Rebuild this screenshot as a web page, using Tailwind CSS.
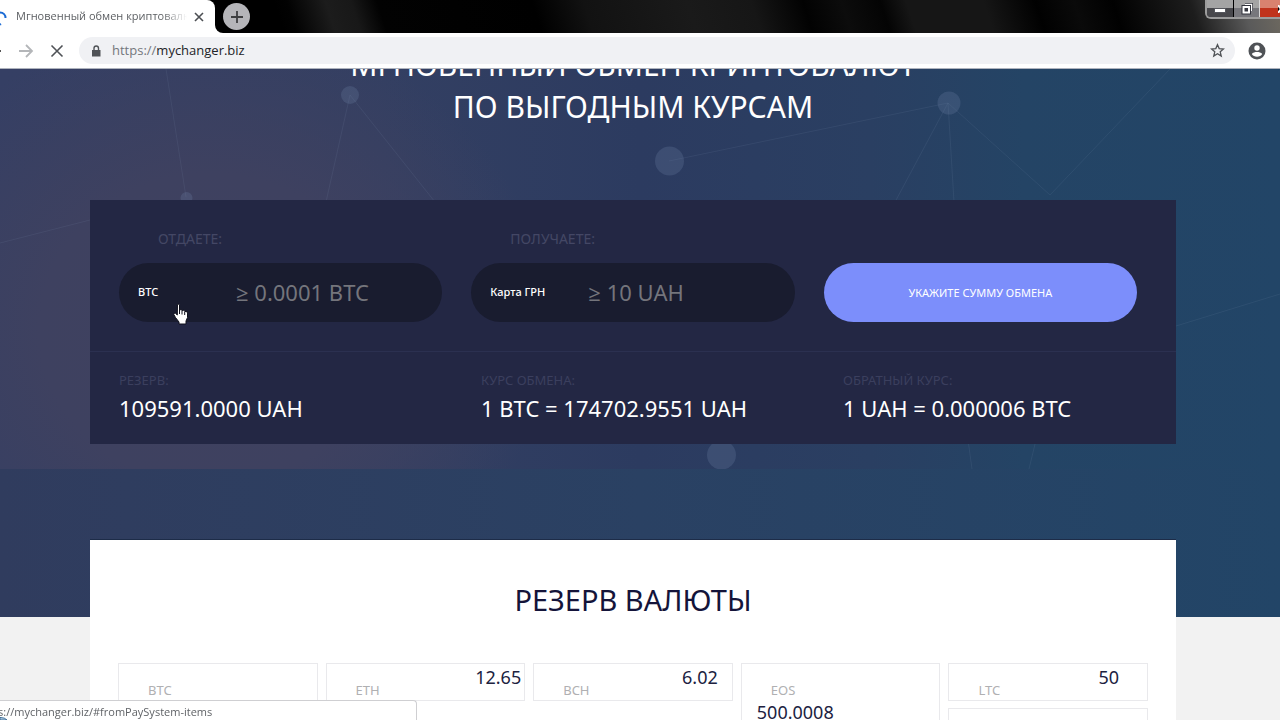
<!DOCTYPE html>
<html lang="ru">
<head>
<meta charset="utf-8">
<title>Мгновенный обмен криптовалют</title>
<script src="https://cdn.jsdelivr.net/npm/@tailwindcss/browser@4"></script>
</head>
<body class="flex h-screen flex-col overflow-hidden bg-[#f2f2f2] font-['Noto_Sans','Open_Sans',sans-serif]">

<!-- Browser chrome -->
<header class="relative shrink-0 border-b border-[#aeb3bd] bg-white font-['Open_Sans',sans-serif]">
  <div class="flex h-[33px] items-stretch bg-[linear-gradient(72deg,#000_22%,#020202_23%,#1c1c1c_26%,#181818_28%,#020202_30%,#000_42%,#121212_46%,#1a1a1a_54%,#161616_59%,#020202_63%,#0c0c0c_66%,#040404_69%,#161616_71%,#161616_77%,#010101_81%,#0a0a0a_84%,#010101_87%,#1d1d1d_93%,#5a5a5a_97%,#6f6a60_100%)]">
    <div class="flex w-[215px] items-center rounded-tr-lg bg-white">
      <svg class="h-5 w-[16px] shrink-0" viewBox="0 0 16 20" fill="none" stroke="#1a6ad4" stroke-width="2"><path d="M0 5.500C3.500 5.500 5.500 8 5.500 11"/><path d="M0 17.500l1-.5"/></svg>
      <span class="w-[171px] overflow-hidden whitespace-nowrap bg-linear-to-r from-[#55585c] from-85% to-transparent bg-clip-text text-[11px] text-transparent">Мгновенный обмен криптовалют</span>
      <button class="ml-[6px] flex h-4 w-4 items-center" aria-label="Закрыть вкладку">
        <svg class="h-3 w-3" viewBox="0 0 12 12" stroke="#4c4f53" stroke-width="1.600"><path d="M2 2l8 8M10 2l-8 8"/></svg>
      </button>
    </div>
    <div class="w-2 self-end bg-white"><div class="h-2 rounded-bl-lg bg-black"></div></div>
    <button class="mt-[3px] flex h-[27px] w-[27px] items-center justify-center rounded-full bg-[#b5b5b9]" aria-label="Новая вкладка">
      <svg class="h-3 w-3" viewBox="0 0 12 12" stroke="#3d3e40" stroke-width="1.800"><path d="M6 0v12M0 6h12"/></svg>
    </button>
    <div class="ml-auto flex h-[19px] overflow-hidden rounded-bl-md border-b-2 border-l-2 border-[#9c9c9c]">
      <button class="flex w-[27px] items-center justify-center border-r border-black bg-linear-to-b from-[#a4a4a4] from-45% to-[#48484c] to-50%" aria-label="Свернуть"><span class="mt-1 h-[5px] w-3 border border-[#55565c] bg-white"></span></button>
      <button class="flex w-[26px] items-center justify-center border-r border-[#d5d5d5] bg-linear-to-b from-[#a4a4a4] from-45% to-[#77777c] to-50%" aria-label="Развернуть">
        <svg class="h-3 w-3" viewBox="0 0 12 12" fill="none"><path d="M4 1.500h6.500V8" stroke="#33353d" stroke-width="3"/><path d="M4 1.500h6.500V8" stroke="#fff" stroke-width="1.500"/><rect x="2.500" y="4" width="5.500" height="5.500" fill="#33353d" stroke="#33353d" stroke-width="4"/><rect x="2.500" y="4" width="5.500" height="5.500" stroke="#fff" stroke-width="2"/></svg>
      </button>
      <button class="flex w-[20px] items-center justify-end bg-linear-to-b from-[#d9826f] from-45% to-[#c0331c] to-50%" aria-label="Закрыть"><svg class="h-2 w-[2px]" viewBox="0 0 2 8" stroke="#fff" stroke-width="2"><path d="M0 0l3 4-3 4"/></svg></button>
    </div>
  </div>
  <div class="flex h-[35px] items-center">
    <button class="h-4 w-[18px]" aria-label="Назад"><svg class="h-4 w-[18px]" viewBox="0 0 18 16" stroke="#555" stroke-width="2"><path d="M0 8h1"/></svg></button>
    <button aria-label="Вперёд"><svg class="h-4 w-4" viewBox="0 0 16 16" fill="none" stroke="#b4b6b9" stroke-width="1.800"><path d="M1 8h13M8 2l6 6-6 6"/></svg></button>
    <button class="ml-[15px]" aria-label="Остановить"><svg class="h-4 w-4" viewBox="0 0 16 16" fill="none" stroke="#4f5256" stroke-width="1.600"><path d="M2.500 2.500l11 11M13.500 2.500l-11 11"/></svg></button>
    <div class="ml-[14px] flex h-[27px] grow items-center rounded-full bg-[#f0f1f4] pr-[10px] pl-[11px]">
      <svg class="h-3 w-3" viewBox="0 0 12 12"><path d="M2 5h8.500v6.500H2z" fill="#505357"/><path d="M4 5V3.200a2.200 2.200 0 0 1 4.500 0V5" fill="none" stroke="#505357" stroke-width="1.400"/></svg>
      <label for="url" class="ml-[10px] text-[13px] text-[#74777c]">https://</label>
      <input id="url" class="min-w-0 grow text-[13px] text-[#222327] outline-none" value="mychanger.biz">
      <button aria-label="Добавить в закладки"><svg class="h-[15px] w-[15px]" viewBox="0 0 16 16" fill="none" stroke="#4f5256" stroke-width="1.400"><path d="M8 1.800l1.800 4.200 4.600.4-3.500 3 1.100 4.500L8 11.500l-4 2.400 1.100-4.500-3.500-3 4.600-.4z"/></svg></button>
    </div>
    <button class="mr-[14px] ml-[13px]" aria-label="Профиль"><svg class="h-[18px] w-[18px]" viewBox="0 0 18 18"><circle cx="9" cy="9" r="8.500" fill="#4f5256"/><circle cx="9" cy="6" r="2.700" fill="#fff"/><path d="M3.800 12c1-1.600 3.300-2 5.200-2s4.200.4 5.200 2c-1 1.700-3 2.800-5.200 2.800S4.800 13.700 3.800 12z" fill="#fff"/></svg></button>
  </div>
</header>

<main class="relative grow overflow-hidden">
  <!-- Hero backdrop -->
  <div class="absolute inset-x-0 top-0 h-[548px] bg-linear-to-r from-[#303c5e] via-[#2a4163] via-50% to-[#224567]">
    <div class="h-[400px] overflow-hidden bg-[radial-gradient(ellipse_340px_310px_at_210px_260px,#40415f_0%,#3e4160_50%,#3e416000_100%),linear-gradient(90deg,#353f64_0%,#333f62_30%,#2c3b60_50%,#2a3f62_68%,#244465_80%,#224567_100%)]">
      <svg class="h-full w-full" viewBox="0 69 1280 400" preserveAspectRatio="xMinYMin slice">
        <g stroke="#8fa4c8" stroke-opacity=".1" fill="none">
          <path d="M669 161L948 103L895 202M948 103L954 202M948 103L1050 195L1170 69M1176 326L1280 294M350 95L435 202M350 95L326 202M166 69L186 197M0 243L90 220M968 440L972 469M1036 440L1029 469"/>
        </g>
        <g fill="#6f83a8" fill-opacity=".25"><circle cx="350" cy="95" r="9"/><circle cx="669.500" cy="161" r="14.500"/><circle cx="949" cy="103" r="11.500"/><circle cx="721.500" cy="455" r="14.500"/><circle cx="186.500" cy="198" r="6"/></g>
      </svg>
    </div>
  </div>

  <div class="relative pr-[14px]">
    <div class="mx-auto max-w-[1086px]">
      <h1 class="-mt-[25px] text-center text-[30px] leading-[42px] text-white uppercase">Мгновенный обмен криптовалют<br>по выгодным курсам</h1>

      <form class="mt-[72px] bg-[#232744]">
        <div class="grid grid-cols-[minmax(0,323fr)_minmax(0,323fr)_minmax(0,313fr)] items-end gap-x-[29px] border-b border-[#2b3050] pt-[28px] pr-[39px] pb-[29px] pl-[29px]">
          <div>
            <label for="give" class="block pl-[39px] text-[14px] leading-[22px] text-[#444765]">ОТДАЕТЕ:</label>
            <div class="mt-[13px] flex h-[59px] items-center rounded-full bg-[#191c2f]">
              <select aria-label="Валюта" class="w-[117px] shrink-0 appearance-none pl-[19px] text-[11px] font-medium text-white outline-none"><option>BTC</option></select>
              <input id="give" class="min-w-0 grow text-[22px] outline-none placeholder:text-[#74757c]" placeholder="≥ 0.0001 BTC">
            </div>
          </div>
          <div>
            <label for="get" class="block pl-[39px] text-[14px] leading-[22px] text-[#444765]">ПОЛУЧАЕТЕ:</label>
            <div class="mt-[13px] flex h-[59px] items-center rounded-full bg-[#191c2f]">
              <select aria-label="Валюта получения" class="w-[117px] shrink-0 appearance-none pl-[19px] text-[11px] font-medium text-white outline-none"><option>Карта ГРН</option></select>
              <input id="get" class="min-w-0 grow text-[22px] outline-none placeholder:text-[#74757c]" placeholder="≥ 10 UAH">
            </div>
          </div>
          <button type="button" class="h-[59px] rounded-full bg-[#7c8efb] pt-px text-[11px] text-white">УКАЖИТЕ СУММУ ОБМЕНА</button>
        </div>
        <dl class="grid grid-cols-3 pt-[17px] pb-[19px]">
          <div class="pl-[29px]"><dt class="text-[13px] leading-[22px] text-[#3b3f5e]">РЕЗЕРВ:</dt><dd class="text-[22px] leading-[34px] text-white">109591.0000 UAH</dd></div>
          <div class="pl-[29px]"><dt class="text-[13px] leading-[22px] text-[#3b3f5e]">КУРС ОБМЕНА:</dt><dd class="text-[22px] leading-[34px] text-white">1 BTC = 174702.9551 UAH</dd></div>
          <div class="pl-[29px]"><dt class="text-[13px] leading-[22px] text-[#3b3f5e]">ОБРАТНЫЙ КУРС:</dt><dd class="text-[22px] leading-[34px] text-white">1 UAH = 0.000006 BTC</dd></div>
        </dl>
      </form>

      <section class="mt-[95px] border-t border-[#1d2c48] bg-white px-[28px] pt-[39px]">
        <h2 class="text-center text-[29px] leading-[42px] text-[#14143a]">РЕЗЕРВ ВАЛЮТЫ</h2>
        <div class="mt-[42px] grid grid-cols-5 items-start gap-x-2 text-[#20223f]">
          <div class="h-[90px] border border-[#e9e9ec] pt-[15px] pl-[29px] text-[13px] leading-[22px] text-[#b0b0b2]">BTC</div>
          <div class="flex h-[38px] justify-between border border-[#e9e9ec] pr-[3px] pl-[29px]"><span class="pt-[15px] text-[13px] leading-[22px] text-[#b0b0b2]">ETH</span><span class="text-[18px] leading-[26px]">12.65</span></div>
          <div class="flex h-[38px] justify-between border border-[#e9e9ec] pr-[14px] pl-[29px]"><span class="pt-[15px] text-[13px] leading-[22px] text-[#b0b0b2]">BCH</span><span class="text-[18px] leading-[26px]">6.02</span></div>
          <div class="h-[90px] border border-[#e9e9ec] pt-[15px] pl-[15px]"><span class="block pl-[14px] text-[13px] leading-[22px] text-[#b0b0b2]">EOS</span><span class="block text-[18px] leading-[22px]">500.0008</span></div>
          <div class="flex flex-col gap-[7px]">
            <div class="flex h-[38px] justify-between border border-[#e9e9ec] pr-[28px] pl-[29px]"><span class="pt-[15px] text-[13px] leading-[22px] text-[#b0b0b2]">LTC</span><span class="text-[18px] leading-[26px]">50</span></div>
            <div class="h-[45px] border border-[#e9e9ec]"></div>
          </div>
        </div>
      </section>
    </div>
  </div>
</main>

<!-- Link status bubble -->
<div class="fixed bottom-0 left-0 flex h-[20px] w-[417px] justify-start overflow-hidden rounded-tr border-t border-r border-[#cfcfd2] bg-white font-['Open_Sans',sans-serif] text-[11px] leading-[21px] text-[#606367]">
  <span class="-ml-[2px] whitespace-nowrap">s://mychanger.biz/#fromPaySystem-items</span>
  <svg class="absolute bottom-0 left-0 h-[3px] w-2" viewBox="0 0 8 3"><path d="M0 .5Q5 .5 7 3H0z" fill="#bcd6ea" stroke="#3a6a94"/></svg>
</div>

<!-- Pointer -->
<svg class="pointer-events-none fixed top-[303px] left-[173px] h-[22px] w-[17px]" viewBox="0 0 17 22"><path d="M4.500 1.500Q6 .5 6.500 2v5.500l1-.8q1.200-.2 1.600 1l1.200-.4q1.300 0 1.500 1.300l1.200-.2q1.500.2 1.500 1.700v4.400L13 18v3H6v-2L2.500 14.500.8 11.500q0-1.800 1.700-1.200L4.300 12z" fill="#fff" stroke="#10111c"/><path d="M6.500 7v4M9 8v3.500M11.700 9v3" stroke="#10111c"/></svg>
</body>
</html>
